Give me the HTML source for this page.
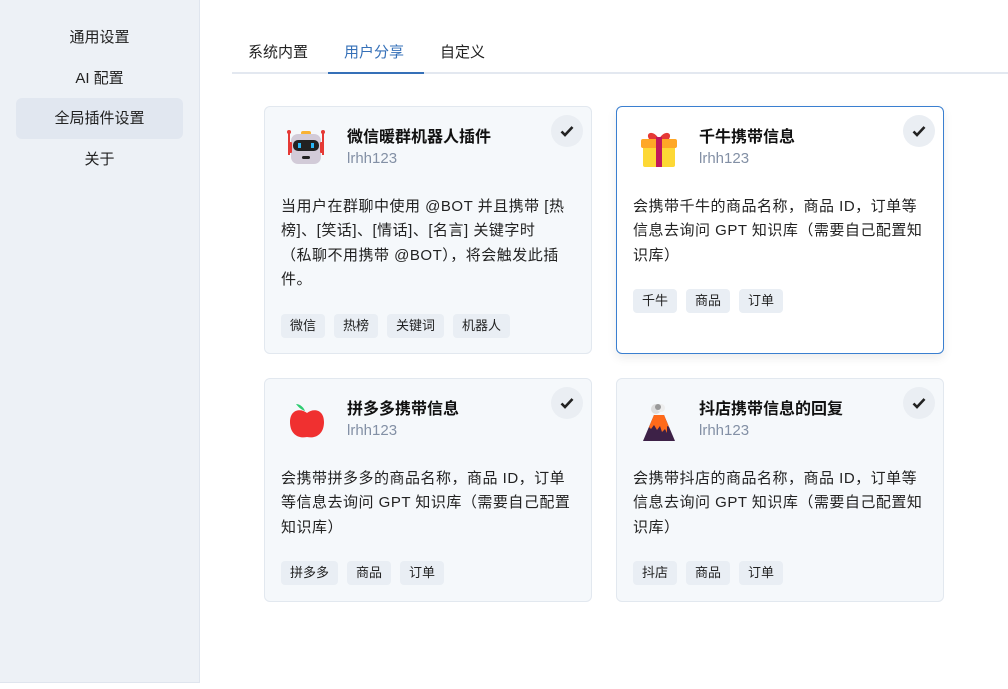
<!DOCTYPE html>
<html><head><meta charset="utf-8"><style>
*{box-sizing:border-box;margin:0;padding:0}
body{width:1008px;height:689px;background:#fff;font-family:"Liberation Sans","Noto Sans CJK SC",sans-serif;color:#1f2937;position:relative;overflow:hidden}
.side{position:absolute;left:0;top:0;width:200px;height:683px;background:#edf1f6;border-right:1px solid #dfe5ee;border-bottom:1px solid #dfe5ee}
.side div{position:absolute;left:16px;width:167px;height:41px;line-height:41px;text-align:center;font-size:15px;color:#222}
.side .act{background:#e1e7f0;border-radius:6px}
.tabs{position:absolute;left:232px;top:41px;width:776px;height:33px;border-bottom:2px solid #e3e8f0}
.tab{position:absolute;top:0;font-size:15px;color:#222;height:33px;line-height:24px}
.tab.on{color:#3570b8;border-bottom:2px solid #3570b8}
.card{position:absolute;width:328px;background:#f5f8fb;border:1px solid #e2e8ef;border-radius:6px}
.card.sel{background:#fff;border-color:#3a7fd0;box-shadow:0 4px 10px rgba(0,0,0,.08)}
.ic{position:absolute;left:20px;top:20px;width:44px;height:44px}
.t{position:absolute;left:82px;top:16px;font-size:16px;font-weight:bold;color:#111}
.u{position:absolute;left:82px;top:43px;font-size:15px;color:#8390a5}
.ck{position:absolute;right:8px;top:8px;width:32px;height:32px;border-radius:50%;background:#eaeef3;display:flex;align-items:center;justify-content:center}
.d{position:absolute;left:16px;top:88px;width:310px;font-size:15px;line-height:24.3px;color:#222;white-space:nowrap;letter-spacing:0.5px}
.tags{position:absolute;left:16px;display:flex;gap:9px}
.tags span{background:#e9eef4;border-radius:4px;font-size:13px;padding:0 9px;height:24px;line-height:24px;color:#222}
</style></head><body>
<div class="side">
<div style="top:17px">通用设置</div>
<div style="top:58px">AI 配置</div>
<div class="act" style="top:98px">全局插件设置</div>
<div style="top:139px">关于</div>
</div>
<div class="tabs">
<div class="tab" style="left:16px">系统内置</div>
<div class="tab on" style="left:96px;width:96px;padding-left:16px">用户分享</div>
<div class="tab" style="left:208px">自定义</div>
</div>

<div class="card" style="left:264px;top:106px;height:248px">
<svg class="ic" viewBox="0 0 44 44"><line x1="4" y1="5" x2="4" y2="28" stroke="#e53935" stroke-width="2"/><line x1="38" y1="5" x2="38" y2="28" stroke="#e53935" stroke-width="2"/><circle cx="4" cy="5" r="2" fill="#e53935"/><circle cx="38" cy="5" r="2" fill="#e53935"/><rect x="16" y="4" width="10" height="4" rx="2" fill="#f9b233"/><rect x="6" y="7" width="30" height="30" rx="7" fill="#d2cbd8"/><rect x="3" y="15" width="4" height="11" rx="1" fill="#e53935"/><rect x="35" y="15" width="4" height="11" rx="1" fill="#e53935"/><rect x="8" y="13" width="26" height="11" rx="5" fill="#222"/><rect x="13" y="16" width="3" height="5" fill="#29b6f6"/><rect x="26" y="16" width="3" height="5" fill="#29b6f6"/><rect x="17" y="29" width="8" height="3" rx="1.5" fill="#222"/></svg>
<div class="t">微信暖群机器人插件</div><div class="u">lrhh123</div>
<div class="ck"><svg width="14" height="12" viewBox="0 0 14 12"><path d="M1.5 6.5 5 10 12.5 2" fill="none" stroke="#222" stroke-width="2.6"/></svg></div>
<div class="d">当用户在群聊中使用 @BOT 并且携带 [热<br>榜]、[笑话]、[情话]、[名言] 关键字时<br>（私聊不用携带 @BOT），将会触发此插<br>件。</div>
<div class="tags" style="top:207px"><span>微信</span><span>热榜</span><span>关键词</span><span>机器人</span></div>
</div>

<div class="card sel" style="left:616px;top:106px;height:248px">
<svg class="ic" viewBox="0 0 44 44"><rect x="6" y="18" width="32" height="22" rx="2" fill="#fdd835"/><rect x="4" y="12" width="36" height="9" rx="2" fill="#ffa726"/><path d="M22 12 C16 2 8 6 12 12Z M22 12 C28 2 36 6 32 12Z" fill="#e53935"/><rect x="19" y="10" width="6" height="30" fill="#c2185b"/></svg>
<div class="t">千牛携带信息</div><div class="u">lrhh123</div>
<div class="ck"><svg width="14" height="12" viewBox="0 0 14 12"><path d="M1.5 6.5 5 10 12.5 2" fill="none" stroke="#222" stroke-width="2.6"/></svg></div>
<div class="d">会携带千牛的商品名称，商品 ID，订单等<br>信息去询问 GPT 知识库（需要自己配置知<br>识库）</div>
<div class="tags" style="top:182px"><span>千牛</span><span>商品</span><span>订单</span></div>
</div>

<div class="card" style="left:264px;top:378px;height:224px">
<svg class="ic" viewBox="0 0 44 44"><path d="M20 12 C18 7 14 5 11 5 C14 9 17 11 20 12Z" fill="#2ecc71"/><path d="M22 14 C16 9 5 10 5 23 C5 34 12 40 22 38 C32 40 39 34 39 23 C39 10 28 9 22 14Z" fill="#f03030"/></svg>
<div class="t">拼多多携带信息</div><div class="u">lrhh123</div>
<div class="ck"><svg width="14" height="12" viewBox="0 0 14 12"><path d="M1.5 6.5 5 10 12.5 2" fill="none" stroke="#222" stroke-width="2.6"/></svg></div>
<div class="d">会携带拼多多的商品名称，商品 ID，订单<br>等信息去询问 GPT 知识库（需要自己配置<br>知识库）</div>
<div class="tags" style="top:182px"><span>拼多多</span><span>商品</span><span>订单</span></div>
</div>

<div class="card" style="left:616px;top:378px;height:224px">
<svg class="ic" viewBox="0 0 44 44"><circle cx="19" cy="10" r="5" fill="#ddd"/><circle cx="24" cy="9" r="4" fill="#eee"/><circle cx="21" cy="8" r="3" fill="#999"/><path d="M17 16 H27 L38 42 H6Z" fill="#3d2147"/><path d="M17 16 H27 L32 28 L30 27 V34 L28 30 L25 33 L23 27 L20 31 L17 26 L14 30 L12 28Z" fill="#ff6a1a"/></svg>
<div class="t">抖店携带信息的回复</div><div class="u">lrhh123</div>
<div class="ck"><svg width="14" height="12" viewBox="0 0 14 12"><path d="M1.5 6.5 5 10 12.5 2" fill="none" stroke="#222" stroke-width="2.6"/></svg></div>
<div class="d">会携带抖店的商品名称，商品 ID，订单等<br>信息去询问 GPT 知识库（需要自己配置知<br>识库）</div>
<div class="tags" style="top:182px"><span>抖店</span><span>商品</span><span>订单</span></div>
</div>
</body></html>
